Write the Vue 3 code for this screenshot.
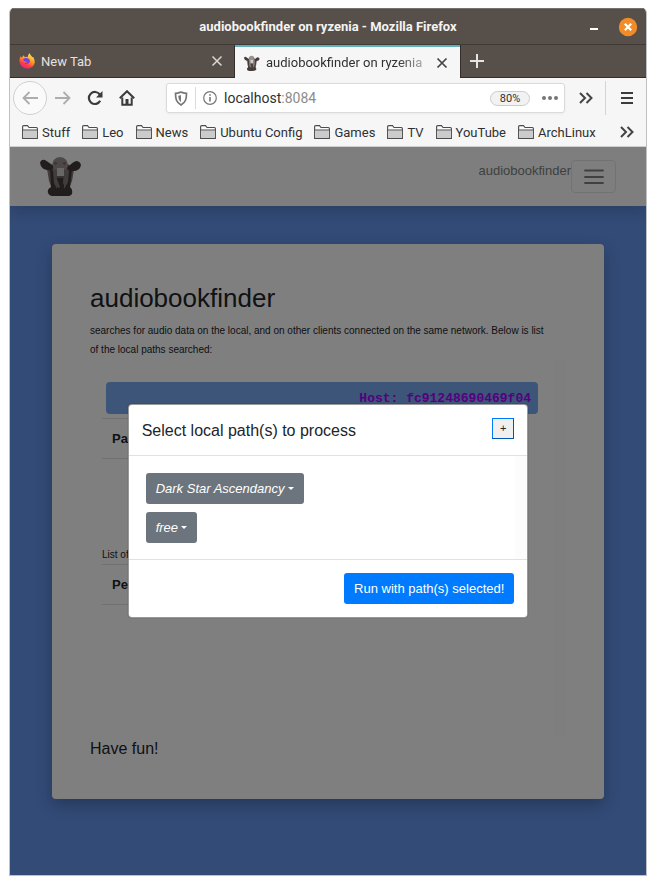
<script setup>
const bookmarks = ['Stuff', 'Leo', 'News', 'Ubuntu Config', 'Games', 'TV', 'YouTube', 'ArchLinux']
const paths = ['Dark Star Ascendancy', 'free']
</script>

<template>
  <div class="window">
    <header class="titlebar">
      <span class="title">audiobookfinder on ryzenia - Mozilla Firefox</span>
      <div class="window-buttons">
        <button class="bare" aria-label="Minimize">
          <svg width="8" height="20" viewBox="0 0 8 20"><path d="M0 12h8" stroke="#fff" stroke-width="2" /></svg>
        </button>
        <button class="bare" aria-label="Close window">
          <svg width="20" height="20" viewBox="0 0 20 20">
            <circle cx="10" cy="10" r="9.2" fill="#f28c28" />
            <path d="M6.8 6.8l6.4 6.4M13.2 6.8l-6.4 6.4" stroke="#fff" stroke-width="2.2" />
          </svg>
        </button>
      </div>
    </header>

    <nav class="tabs" aria-label="Tabs">
      <div class="tab">
        <svg width="16" height="16" viewBox="0 0 16 16">
          <defs>
            <linearGradient id="flame" x1="0.8" y1="0" x2="0.3" y2="1">
              <stop offset="0" stop-color="#fff04a" /><stop offset="0.45" stop-color="#ff9a22" />
              <stop offset="0.75" stop-color="#ff3b47" /><stop offset="1" stop-color="#e3209a" />
            </linearGradient>
          </defs>
          <path d="M1.6 3.2l1.1 1.4C3.6 3.6 4.3 2.5 4.8 2.2c.1 1 .6 1.5 1.4 1.9L9 3.7C9 2.200 9.600 1 10.600.3c.3 1.700 1.800 2.400 2.900 3.900C14.300 4 14.300 4 14.500 4.500c3 5.200.2 11-6.500 11C1.500 15.500-1.400 8.400 1.600 3.200z" fill="url(#flame)" />
          <path d="M4 6.500c2.400-2.300 6.500-1.700 7 1.500.3 2.600-3.800 4.200-5.900 2.200 1.500.1 2.400-.4 3.300-1.100C6 9 4.800 8 4 6.500z" fill="#7542e5" />
        </svg>
        <span class="tab-label">New Tab</span>
        <button class="bare" aria-label="Close New Tab">
          <svg width="12" height="12" viewBox="0 0 12 12"><path d="M1.500 1.500l9 9M10.500 1.500l-9 9" stroke="#d9d6d4" stroke-width="1.500" /></svg>
        </button>
      </div>
      <div class="tab active">
        <svg width="16" height="16" viewBox="0 0 42 40">
          <use href="#cow" />
        </svg>
        <span class="tab-label">audiobookfinder on ryzenia</span>
        <button class="bare" aria-label="Close audiobookfinder">
          <svg width="12" height="12" viewBox="0 0 12 12"><path d="M1.500 1.500l9 9M10.500 1.500l-9 9" stroke="#444" stroke-width="1.700" /></svg>
        </button>
      </div>
      <button class="bare new-tab" aria-label="New tab">
        <svg width="14" height="14" viewBox="0 0 14 14"><path d="M7 0v14M0 7h14" stroke="#e6e4e2" stroke-width="2" /></svg>
      </button>
    </nav>

    <div class="toolbar">
      <button class="bare back" aria-label="Back">
        <svg width="16" height="14" viewBox="0 0 16 14"><path d="M16 7H1.500M7.500 1l-6 6 6 6" fill="none" stroke="#adadad" stroke-width="1.800" /></svg>
      </button>
      <button class="bare" aria-label="Forward">
        <svg width="16" height="14" viewBox="0 0 16 14"><path d="M0 7h14.500M8.500 1l6 6-6 6" fill="none" stroke="#adadad" stroke-width="1.800" /></svg>
      </button>
      <button class="bare" aria-label="Reload">
        <svg width="16" height="16" viewBox="0 0 16 16">
          <path d="M13.200 10.800A6 6 0 1 1 12.800 4.500" fill="none" stroke="#3b3b3b" stroke-width="2.200" />
          <path d="M15.500 1v6.500H9z" fill="#3b3b3b" />
        </svg>
      </button>
      <button class="bare" aria-label="Home">
        <svg width="16" height="16" viewBox="0 0 16 16">
          <path d="M.8 8.300L8 1.200l7.200 7.100" fill="none" stroke="#3b3b3b" stroke-width="2" />
          <path d="M3.300 7.500v7.300h9.400V7.500" fill="none" stroke="#3b3b3b" stroke-width="2" />
          <path d="M6.500 14V9h3v5z" fill="#3b3b3b" />
        </svg>
      </button>
      <div class="urlbar">
        <svg width="14" height="15" viewBox="0 0 14 15">
          <path d="M1.500 2.300C4 2.300 5.500 1.500 7 1c1.500.5 3 1.300 5.500 1.300 0 5-.5 9-5.500 11.700C2 11.300 1.500 7.300 1.500 2.300z" fill="none" stroke="#767676" stroke-width="1.700" />
          <path d="M7 4v7C4.800 9.300 4.400 7.500 4.300 4.800 5.400 4.700 6.200 4.300 7 4z" fill="#767676" />
        </svg>
        <span class="rule"></span>
        <svg width="14" height="14" viewBox="0 0 14 14">
          <circle cx="7" cy="7" r="6.300" fill="none" stroke="#767676" stroke-width="1.200" />
          <path d="M7 6v4.500M7 3.200v1.600" stroke="#767676" stroke-width="1.600" />
        </svg>
        <span class="address">localhost<span>:8084</span></span>
        <button class="zoom">80%</button>
        <button class="bare" aria-label="Page actions">
          <svg width="16" height="4" viewBox="0 0 16 4"><g fill="#767676"><circle cx="2" cy="2" r="2" /><circle cx="8" cy="2" r="2" /><circle cx="14" cy="2" r="2" /></g></svg>
        </button>
      </div>
      <button class="bare overflow" aria-label="More tools">
        <svg width="14" height="12" viewBox="0 0 14 12"><path d="M1 1l5 5-5 5M7.500 1l5 5-5 5" fill="none" stroke="#444" stroke-width="2" /></svg>
      </button>
      <button class="bare menu" aria-label="Application menu">
        <svg width="12" height="12" viewBox="0 0 12 12"><path d="M0 1h12M0 6h12M0 11h12" stroke="#3b3b3b" stroke-width="1.800" /></svg>
      </button>
    </div>

    <nav class="bookmarks" aria-label="Bookmarks">
      <a v-for="name in bookmarks" :key="name" href="#">
        <svg width="16" height="14" viewBox="0 0 16 14">
          <path d="M.6 13.400V1.800Q.6.600 1.800.600H5.500L7 2.500h7.400q1 0 1 1v9.900z" fill="#fafafa" stroke="#4c4c4c" stroke-width="1.100" />
          <path d="M1.200 5.500h13.600v7.300H1.200z" fill="#cbcbcb" />
          <path d="M.6 5h14.800" stroke="#4c4c4c" />
        </svg>
        {{ name }}
      </a>
      <button class="bare more" aria-label="More bookmarks">
        <svg width="14" height="12" viewBox="0 0 14 12"><path d="M1 1l5 5-5 5M7.500 1l5 5-5 5" fill="none" stroke="#444" stroke-width="2" /></svg>
      </button>
    </nav>

    <div class="page">
      <header class="navbar">
        <svg class="logo" width="42" height="40" viewBox="0 0 42 40" role="img" aria-label="Cow head">
          <g id="cow">
            <path d="M7 13L13 8h15l6 6-2 11-3 8H12L9 25z" fill="#857b7a" />
            <path d="M12 12Q12 1 20 1t8 11l-4 2h-8z" fill="#9c9290" />
            <path d="M14 6l4 1-3 2zM26 6l-4 1 3 2z" fill="#6e6262" />
            <path d="M0 7Q1 3 5 4q3 2 6 4 3 2 2 5-2 2-6 1-6-1-7-7zM41 9q-1-4-5-4-3 1-6 4-3 1-3 4 2 3 6 2 7 0 8-6z" fill="#453b3b" />
            <path d="M10 12l3 3 1 12 3 6v-12h7v12l4-7 1-11 3-2-1 10-1 8q3 2 2 7-2 3-12 3-11 0-12-4-1-4 3-6z" fill="#453b3b" />
            <path d="M14 14l3 2v7l3 8-2 1-4-7zM24 15l4-2-1 9-2 9-2-4z" fill="#857b7a" />
            <path d="M17 12h7v9h-7z" fill="#d2cccc" />
            <path d="M17 20h7l1 2h-9z" fill="#716666" />
          </g>
        </svg>
        <a class="brand" href="#">audiobookfinder</a>
        <button class="toggler" aria-label="Toggle navigation">
          <svg width="20" height="15" viewBox="0 0 20 15"><path d="M1 1.500h18M1 8h18M1 14h18" stroke="#808080" stroke-width="1.800" stroke-linecap="round" /></svg>
        </button>
      </header>

      <main class="card">
        <h1>audiobookfinder</h1>
        <p class="lead">searches for audio data on the local, and on other clients connected on the same network. Below is list of the local paths searched:</p>
        <section class="results">
          <div class="host">Host: fc91248690469f04</div>
          <table><thead><tr><th>Path</th></tr></thead></table>
          <p class="peers-label">List of peers:</p>
          <table><thead><tr><th>Peers</th></tr></thead></table>
        </section>
        <p class="fun">Have fun!</p>
      </main>

      <div class="backdrop">
        <section class="modal" role="dialog" aria-labelledby="modal-title">
          <header class="modal-header">
            <h2 id="modal-title">Select local path(s) to process</h2>
            <button class="add">+</button>
          </header>
          <div class="modal-body">
            <button v-for="path in paths" :key="path" class="btn secondary">{{ path }}<i class="caret"></i></button>
          </div>
          <footer class="modal-footer">
            <button class="btn primary">Run with path(s) selected!</button>
          </footer>
        </section>
      </div>
    </div>
  </div>
</template>

<style>
html, body { height: 100%; background: #fff; }
#app { min-height: 100%; display: flex; }
</style>

<style scoped>
* { box-sizing: border-box; }
h1, h2, p { margin: 0; font-weight: 400; }
svg { display: block; flex: none; }
a { color: inherit; text-decoration: none; }
button { font: inherit; }
.bare { background: none; border: 0; padding: 0; flex: none; }
.window {
  flex: 1; min-width: 0; margin: 8px 9px 9px; border: 1px solid #bfc0c4; border-top: 0;
  border-radius: 5px 5px 0 0; overflow: hidden; display: flex; flex-direction: column;
  font-family: Roboto, "Open Sans", sans-serif; font-size: 13px; color: #303030; background: #f6f6f6;
}
.titlebar {
  height: 37px; display: grid; grid-template-columns: 1fr auto 1fr; align-items: center;
  padding: 0 8px; background: #574f4a; border-top: 1px solid #77706c; border-bottom: 1px solid #403a37;
}
.title { grid-column: 2; color: #f4f3f2; font-weight: 700; }
.window-buttons { display: flex; gap: 20px; justify-content: flex-end; }
.tabs { height: 33px; display: flex; background: #574f4a; }
.tab {
  width: 225px; display: flex; align-items: center; gap: 6px; padding: 0 12px 0 9px;
  color: #e4e2e0; border-bottom: 1px solid #332e2b;
}
.tab.active {
  background: #f6f6f6; color: #303030; border-top: 2px solid #5fb0bb; border-bottom: 0;
  box-shadow: -1px 0 #332e2b;
}
.tab-label { flex: 1; overflow: hidden; white-space: nowrap; }
.active .tab-label { mask-image: linear-gradient(to right, #000 80%, #0003); }
.new-tab { flex: 1; padding-left: 9px; border-left: 1px solid #332e2b; border-bottom: 1px solid #332e2b; }
.toolbar { height: 40px; display: flex; align-items: center; gap: 16px; padding: 0 0 0 3px; }
.back {
  width: 34px; height: 34px; border: 1px solid #d0d0d0; border-radius: 50%;
  display: grid; place-items: center; margin-right: -8px; background: #fafafa;
}
.urlbar {
  flex: 1; height: 30px; margin: 0 -2px 0 15px; padding: 0 6px 0 7px; display: flex; align-items: center; gap: 7px;
  background: #fff; border: 1px solid #dadada; border-radius: 3px; box-shadow: 0 1px 3px #0000000d;
}
.rule { width: 1px; height: 22px; background: #dadada; }
.address { flex: 1; font-size: 14px; }
.address span { color: #8c8c8c; }
.zoom {
  width: 40px; height: 15px; padding: 0; font-size: 11px; line-height: 13px; color: #303030;
  border: 1px solid #cbcbcb; border-radius: 8px; background: #f2f2f2; margin-right: 5px;
}
.overflow { margin-right: -4px; }
.menu { height: 34px; padding: 0 13px 0 15px; border-left: 1px solid #d4d4d4; }
.bookmarks {
  height: 29px; display: flex; align-items: center; gap: 12px; padding: 0 12px;
  border-bottom: 1px solid #cfcfcf; white-space: nowrap;
}
.bookmarks a { display: flex; align-items: center; gap: 4px; }
.more { margin-left: auto; }
.page {
  position: relative; flex: 1; background: #6496ee; overflow: hidden; color: #212529;
  font-family: "Liberation Sans", Arial, sans-serif; font-size: 13px;
}
.navbar {
  position: relative; height: 59px; padding: 0 30px; display: flex; align-items: flex-start;
  background: #fdfdfd; box-shadow: 0 6px 13px #00000026;
}
.logo { margin-top: 9px; }
.brand { margin: 16px 0 0 auto; color: #7f7f7f; }
.toggler {
  width: 45px; height: 33px; margin-top: 13px; padding: 0; display: grid; place-items: center;
  border: 1px solid #e5e5e5; border-radius: 4px; background: none;
}
.card {
  min-height: 555px; margin: 38px 42px; padding: 39px 38px; background: #fff; border-radius: 4px;
  box-shadow: 0 6px 16px #00000040;
}
h1 { font-size: 26px; line-height: 31px; margin-bottom: 7px; }
.lead { font-size: 10px; line-height: 19px; padding-right: 12px; }
.results { height: 377px; padding: 23px 16px 0 12px; border-right: 12px solid #fdfdfd; }
.host {
  height: 32px; margin: 0 0 4px 4px; padding: 8px 7px 0; border-radius: 4px; text-align: right;
  background: #78aaf0; color: #ac00ff; font: bold 13px/18px "Liberation Mono", monospace;
}
table { width: 90%; border-collapse: collapse; font-size: 13px; }
th { height: 40px; padding: 0 10px; text-align: left; border-top: 1px solid #dee2e6; border-bottom: 1px solid #dee2e6; }
.peers-label { margin-top: 86px; font-size: 10px; line-height: 19px; }
.fun { margin-top: 3px; font-size: 16px; line-height: 19px; }
.backdrop {
  position: absolute; inset: 0; padding-top: 257px; background: #00000080;
}
.modal {
  width: 63%; margin: 0 auto; min-width: 300px; background: #fff; border: 1px solid #00000066;
  border-radius: 4px; box-shadow: 0 0 1px #00000080;
}
.modal-header { display: flex; align-items: flex-start; justify-content: space-between; padding: 13px 13px 11px; border-bottom: 1px solid #dee2e6; }
h2 { font-size: 16px; line-height: 26px; }
.add {
  width: 22px; height: 21px; padding: 0; font-size: 11px; line-height: 17px; color: #212529;
  background: #f0f0f0; border: 1px solid #007bff; border-right-color: #0056b3; border-bottom-color: #0056b3;
}
.modal-body {
  display: flex; flex-direction: column; align-items: flex-start; gap: 8px; padding: 17px 0 16px 17px;
  border-right: 12px solid #fcfcfc;
}
.btn { padding: 0 10px; line-height: 31px; border: 0; border-radius: 3px; color: #fff; font-size: 13px; }
.secondary { display: flex; align-items: center; gap: 3px; background: #6c757d; font-style: italic; }
.caret { border: 3px solid transparent; border-top-color: #fff; border-bottom: 0; }
.primary { background: #007bff; }
.modal-footer { display: flex; justify-content: flex-end; padding: 13px; border-top: 1px solid #dee2e6; }
</style>
